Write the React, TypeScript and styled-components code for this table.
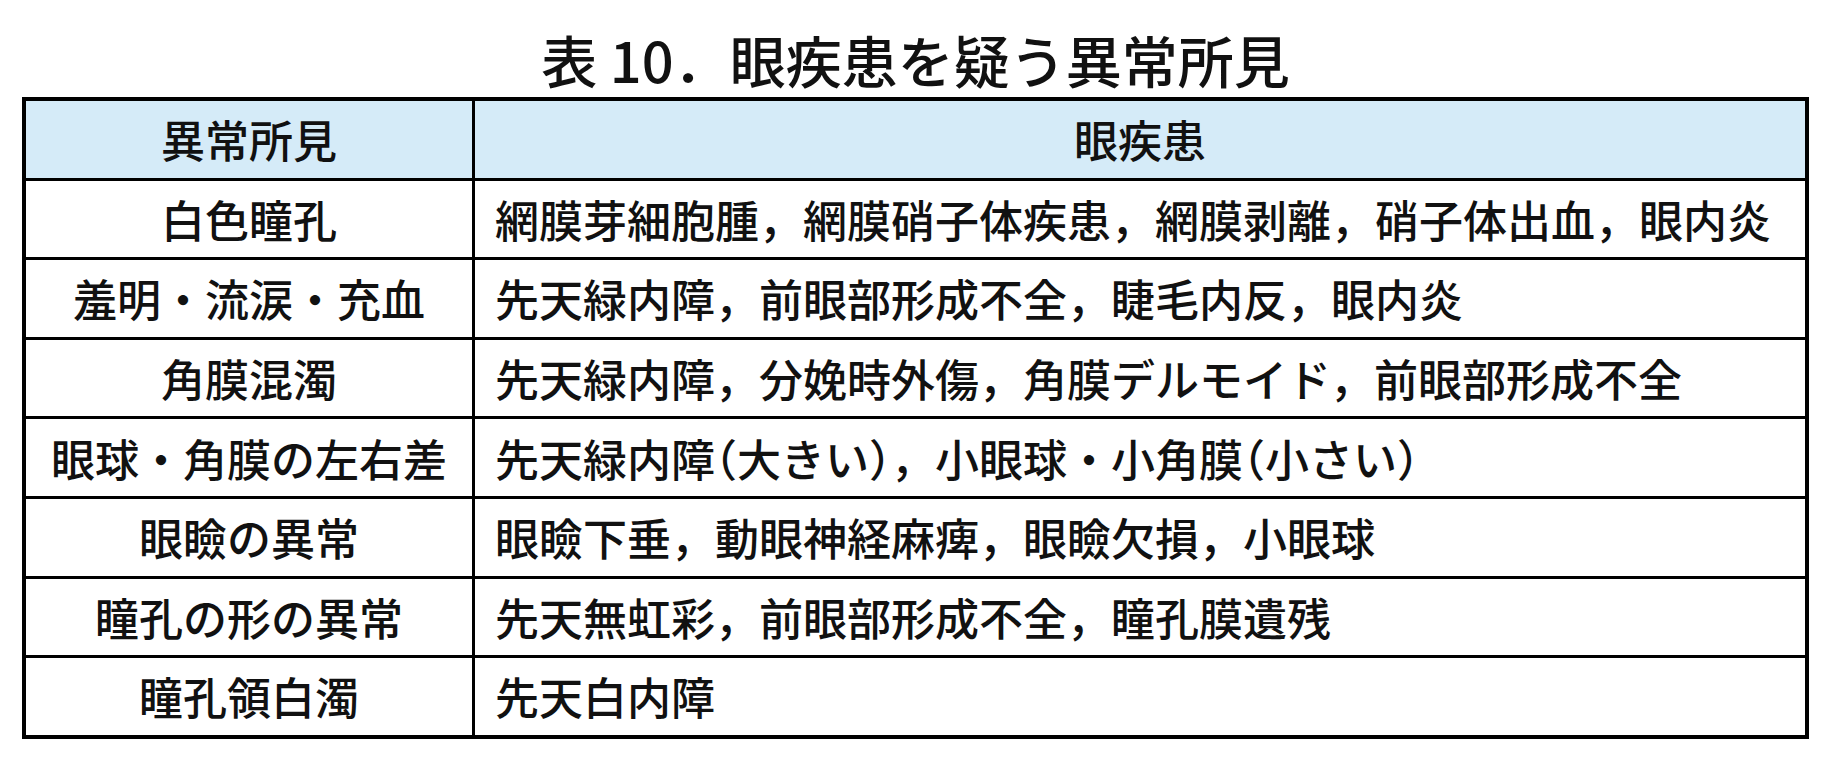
import React from "react";
import styled, { createGlobalStyle } from "styled-components";

const GlobalStyle = createGlobalStyle`
  html, body {
    margin: 0;
    padding: 0;
    background: #ffffff;
  }
  body {
    font-family: "Noto Sans CJK JP", "Noto Sans", sans-serif;
    color: #111111;
  }
`;

const rows: { finding: React.ReactNode; diseases: React.ReactNode }[] = [
  {
    finding: "白色瞳孔",
    diseases: "網膜芽細胞腫，網膜硝子体疾患，網膜剥離，硝子体出血，眼内炎",
  },
  {
    finding: "羞明・流涙・充血",
    diseases: "先天緑内障，前眼部形成不全，睫毛内反，眼内炎",
  },
  {
    finding: "角膜混濁",
    diseases: "先天緑内障，分娩時外傷，角膜デルモイド，前眼部形成不全",
  },
  {
    finding: "眼球・角膜の左右差",
    diseases: (
      <>
        先天緑内障<Paren>（</Paren>大きい<Paren>）</Paren>，小眼球・小角膜
        <Paren>（</Paren>小さい<Paren>）</Paren>
      </>
    ),
  },
  {
    finding: "眼瞼の異常",
    diseases: "眼瞼下垂，動眼神経麻痺，眼瞼欠損，小眼球",
  },
  {
    finding: "瞳孔の形の異常",
    diseases: "先天無虹彩，前眼部形成不全，瞳孔膜遺残",
  },
  {
    finding: "瞳孔領白濁",
    diseases: "先天白内障",
  },
];

function Paren({ children }: { children: React.ReactNode }) {
  return <HalfWidth>{children}</HalfWidth>;
}

export default function App() {
  return (
    <Page>
      <GlobalStyle />
      <Figure>
        <Caption>表 10．眼疾患を疑う異常所見</Caption>
        <Table>
          <thead>
            <tr>
              <HeadCell>異常所見</HeadCell>
              <HeadCell>眼疾患</HeadCell>
            </tr>
          </thead>
          <tbody>
            {rows.map((row, i) => (
              <tr key={i}>
                <FindingCell>{row.finding}</FindingCell>
                <DiseaseCell>{row.diseases}</DiseaseCell>
              </tr>
            ))}
          </tbody>
        </Table>
      </Figure>
    </Page>
  );
}

const Page = styled.div`
  width: 1831px;
  height: 768px;
  padding-left: 22px;
  box-sizing: border-box;
  background: #ffffff;
`;

const Figure = styled.div`
  width: 1787px;
  display: flex;
  flex-direction: column;
`;

const Caption = styled.h1`
  margin: 0;
  padding-top: 31px;
  height: 97px;
  box-sizing: border-box;
  text-align: center;
  font-size: 56px;
  line-height: 56px;
  font-weight: 500;
  color: #111111;
  white-space: nowrap;
`;

const Table = styled.table`
  width: 1787px;
  border-collapse: collapse;
  table-layout: fixed;
  border: 4px solid #000000;

  td,
  th {
    border: 3px solid #000000;
    height: 76.6px;
    padding: 0;
    font-size: 44px;
    line-height: 44px;
    font-weight: 500;
    white-space: nowrap;
    color: #111111;
  }

  th:first-child,
  td:first-child {
    width: 446px;
  }
`;

const HeadCell = styled.th`
  background: #d5ebf8;
  text-align: center;
`;

const FindingCell = styled.td`
  text-align: center;
`;

const DiseaseCell = styled.td`
  text-align: left;
  padding-left: 20px !important;
`;

const HalfWidth = styled.span`
  font-feature-settings: "halt";
`;
